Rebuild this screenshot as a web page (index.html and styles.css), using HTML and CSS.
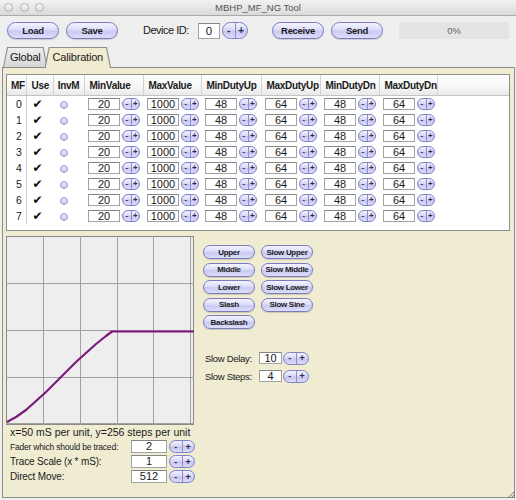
FILE: index.html
```html
<!DOCTYPE html>
<html lang="en">
<head>
    <meta charset="UTF-8">
    <meta name="viewport" content="width=device-width, initial-scale=1.0">
    <title>MBHP_MF_NG Tool</title>
    <link rel="stylesheet" href="styles.css">
</head>
<body>
    <div class="window">
        <div class="titlebar">
            <div class="lights"><span></span><span></span><span></span></div>
            <div class="title">MBHP_MF_NG Tool</div>
        </div>

        <div class="toolbar">
            <button class="aqua btn-load">Load</button>
            <button class="aqua btn-save">Save</button>
            <span class="dev-label">Device ID:</span>
            <span class="field dev-field">0</span>
            <span class="spin spin-lg"><b>-</b><b>+</b></span>
            <button class="aqua btn-receive">Receive</button>
            <button class="aqua btn-send">Send</button>
            <div class="progress">0%</div>
        </div>

        <div class="tabs">
            <div class="tab">Global</div>
            <div class="tab active">Calibration</div>
        </div>

        <div class="panel">
            <div class="grid-wrap">
                <table class="grid">
                    <colgroup>
                        <col style="width:19px"><col style="width:27px"><col style="width:31px">
                        <col style="width:59px"><col style="width:58px"><col style="width:60px">
                        <col style="width:59px"><col style="width:59px"><col style="width:58px"><col>
                    </colgroup>
                    <thead>
                        <tr>
                            <th>MF</th><th>Use</th><th class="c">InvM</th><th>MinValue</th><th>MaxValue</th>
                            <th>MinDutyUp</th><th>MaxDutyUp</th><th>MinDutyDn</th><th>MaxDutyDn</th><th></th>
                        </tr>
                    </thead>
                    <tbody>
                        <tr><td class="mf">0</td><td class="use">✔</td><td><i class="radio"></i></td>
                            <td><span class="val">20</span><span class="spin"><b>-</b><b>+</b></span></td>
                            <td><span class="val">1000</span><span class="spin"><b>-</b><b>+</b></span></td>
                            <td><span class="val">48</span><span class="spin"><b>-</b><b>+</b></span></td>
                            <td><span class="val">64</span><span class="spin"><b>-</b><b>+</b></span></td>
                            <td><span class="val">48</span><span class="spin"><b>-</b><b>+</b></span></td>
                            <td><span class="val">64</span><span class="spin"><b>-</b><b>+</b></span></td><td></td></tr>
                        <tr><td class="mf">1</td><td class="use">✔</td><td><i class="radio"></i></td>
                            <td><span class="val">20</span><span class="spin"><b>-</b><b>+</b></span></td>
                            <td><span class="val">1000</span><span class="spin"><b>-</b><b>+</b></span></td>
                            <td><span class="val">48</span><span class="spin"><b>-</b><b>+</b></span></td>
                            <td><span class="val">64</span><span class="spin"><b>-</b><b>+</b></span></td>
                            <td><span class="val">48</span><span class="spin"><b>-</b><b>+</b></span></td>
                            <td><span class="val">64</span><span class="spin"><b>-</b><b>+</b></span></td><td></td></tr>
                        <tr><td class="mf">2</td><td class="use">✔</td><td><i class="radio"></i></td>
                            <td><span class="val">20</span><span class="spin"><b>-</b><b>+</b></span></td>
                            <td><span class="val">1000</span><span class="spin"><b>-</b><b>+</b></span></td>
                            <td><span class="val">48</span><span class="spin"><b>-</b><b>+</b></span></td>
                            <td><span class="val">64</span><span class="spin"><b>-</b><b>+</b></span></td>
                            <td><span class="val">48</span><span class="spin"><b>-</b><b>+</b></span></td>
                            <td><span class="val">64</span><span class="spin"><b>-</b><b>+</b></span></td><td></td></tr>
                        <tr><td class="mf">3</td><td class="use">✔</td><td><i class="radio"></i></td>
                            <td><span class="val">20</span><span class="spin"><b>-</b><b>+</b></span></td>
                            <td><span class="val">1000</span><span class="spin"><b>-</b><b>+</b></span></td>
                            <td><span class="val">48</span><span class="spin"><b>-</b><b>+</b></span></td>
                            <td><span class="val">64</span><span class="spin"><b>-</b><b>+</b></span></td>
                            <td><span class="val">48</span><span class="spin"><b>-</b><b>+</b></span></td>
                            <td><span class="val">64</span><span class="spin"><b>-</b><b>+</b></span></td><td></td></tr>
                        <tr><td class="mf">4</td><td class="use">✔</td><td><i class="radio"></i></td>
                            <td><span class="val">20</span><span class="spin"><b>-</b><b>+</b></span></td>
                            <td><span class="val">1000</span><span class="spin"><b>-</b><b>+</b></span></td>
                            <td><span class="val">48</span><span class="spin"><b>-</b><b>+</b></span></td>
                            <td><span class="val">64</span><span class="spin"><b>-</b><b>+</b></span></td>
                            <td><span class="val">48</span><span class="spin"><b>-</b><b>+</b></span></td>
                            <td><span class="val">64</span><span class="spin"><b>-</b><b>+</b></span></td><td></td></tr>
                        <tr><td class="mf">5</td><td class="use">✔</td><td><i class="radio"></i></td>
                            <td><span class="val">20</span><span class="spin"><b>-</b><b>+</b></span></td>
                            <td><span class="val">1000</span><span class="spin"><b>-</b><b>+</b></span></td>
                            <td><span class="val">48</span><span class="spin"><b>-</b><b>+</b></span></td>
                            <td><span class="val">64</span><span class="spin"><b>-</b><b>+</b></span></td>
                            <td><span class="val">48</span><span class="spin"><b>-</b><b>+</b></span></td>
                            <td><span class="val">64</span><span class="spin"><b>-</b><b>+</b></span></td><td></td></tr>
                        <tr><td class="mf">6</td><td class="use">✔</td><td><i class="radio"></i></td>
                            <td><span class="val">20</span><span class="spin"><b>-</b><b>+</b></span></td>
                            <td><span class="val">1000</span><span class="spin"><b>-</b><b>+</b></span></td>
                            <td><span class="val">48</span><span class="spin"><b>-</b><b>+</b></span></td>
                            <td><span class="val">64</span><span class="spin"><b>-</b><b>+</b></span></td>
                            <td><span class="val">48</span><span class="spin"><b>-</b><b>+</b></span></td>
                            <td><span class="val">64</span><span class="spin"><b>-</b><b>+</b></span></td><td></td></tr>
                        <tr><td class="mf">7</td><td class="use">✔</td><td><i class="radio"></i></td>
                            <td><span class="val">20</span><span class="spin"><b>-</b><b>+</b></span></td>
                            <td><span class="val">1000</span><span class="spin"><b>-</b><b>+</b></span></td>
                            <td><span class="val">48</span><span class="spin"><b>-</b><b>+</b></span></td>
                            <td><span class="val">64</span><span class="spin"><b>-</b><b>+</b></span></td>
                            <td><span class="val">48</span><span class="spin"><b>-</b><b>+</b></span></td>
                            <td><span class="val">64</span><span class="spin"><b>-</b><b>+</b></span></td><td></td></tr>
                    </tbody>
                </table>
            </div>

            <div class="lower">
                <div class="trace">
                    <!-- fader trace: 5 x 4 units -->
                    <svg class="chart" width="188" height="189" viewBox="0 0 188 189">
                        <rect x="0.5" y="0.5" width="187" height="188" fill="#eeeeee" stroke="#8a8a8a"/>
                        <g stroke="#a2a2a2" stroke-width="1">
                            <line x1="37.5" y1="0" x2="37.5" y2="189"/>
                            <line x1="74.5" y1="0" x2="74.5" y2="189"/>
                            <line x1="111.5" y1="0" x2="111.5" y2="189"/>
                            <line x1="147.5" y1="0" x2="147.5" y2="189"/>
                            <line x1="184.5" y1="0" x2="184.5" y2="189"/>
                            <line x1="0" y1="47.5" x2="188" y2="47.5"/>
                            <line x1="0" y1="94.5" x2="188" y2="94.5"/>
                            <line x1="0" y1="141.5" x2="188" y2="141.5"/>
                            <line x1="0" y1="187.5" x2="188" y2="187.5"/>
                        </g>
                        <polyline fill="none" stroke="#7c1a7c" stroke-width="2.2" stroke-linejoin="round"
                                  points="1,186 10,181 20,174 30,165 40,156 50,146 60,136 70,126 80,117 90,108 100,100 106,95.5 188,95.5"/>
                    </svg>
                    <div class="units">x=50 mS per unit, y=256 steps per unit</div>
                    <div class="param">
                        <span class="param-label small">Fader which should be traced:</span>
                        <span class="field">2</span>
                        <span class="spin spin-md"><b>-</b><b>+</b></span>
                    </div>
                    <div class="param">
                        <span class="param-label">Trace Scale (x * mS):</span>
                        <span class="field">1</span>
                        <span class="spin spin-md"><b>-</b><b>+</b></span>
                    </div>
                    <div class="param">
                        <span class="param-label">Direct Move:</span>
                        <span class="field">512</span>
                        <span class="spin spin-md"><b>-</b><b>+</b></span>
                    </div>
                </div>

                <div class="presets">
                    <div class="preset-grid">
                        <button class="aqua small">Upper</button>
                        <button class="aqua small">Slow Upper</button>
                        <button class="aqua small">Middle</button>
                        <button class="aqua small">Slow Middle</button>
                        <button class="aqua small">Lower</button>
                        <button class="aqua small">Slow Lower</button>
                        <button class="aqua small">Slash</button>
                        <button class="aqua small">Slow Sine</button>
                        <button class="aqua small">Backslash</button>
                    </div>
                    <div class="slow">
                        <div class="slow-row">
                            <span class="slow-label">Slow Delay:</span>
                            <span class="field">10</span>
                            <span class="spin spin-md"><b>-</b><b>+</b></span>
                        </div>
                        <div class="slow-row">
                            <span class="slow-label">Slow Steps:</span>
                            <span class="field">4</span>
                            <span class="spin spin-md"><b>-</b><b>+</b></span>
                        </div>
                    </div>
                </div>
            </div>
        </div>

        <svg class="grip" width="8" height="8" viewBox="0 0 8 8">
            <path d="M8 1 L1 8 M8 4 L4 8 M8 7 L7 8" stroke="#777" stroke-width="1"/>
        </svg>
    </div>
</body>
</html>
```

FILE: styles.css
```css
body {
    margin: 0;
    background: #efefef;
    font-family: "Liberation Sans", Arial, sans-serif;
    color: #1a1a1a;
}
.window {
    position: relative;
    width: 516px;
    height: 500px;
    overflow: hidden;
    background: #efefef;
}

/* title bar */
.titlebar {
    height: 15px;
    border-bottom: 1px solid #a9a9a9;
    background: linear-gradient(#f2f2f2, #dadada);
    display: grid;
    grid-template-columns: 1fr auto 1fr;
    align-items: center;
}
.lights {
    display: flex;
    gap: 6.5px;
    padding-left: 4px;
}
.lights span {
    width: 9px;
    height: 9px;
    box-sizing: border-box;
    border-radius: 50%;
    border: 1px solid #b0b0b0;
    background: linear-gradient(#f6f6f6, #dedede);
}
.title {
    font-size: 9.5px;
    color: #555;
}

/* toolbar */
.toolbar {
    height: 31px;
    box-sizing: border-box;
    padding: 6px 0 0 7px;
    display: flex;
    align-items: flex-start;
}
.aqua {
    height: 17px;
    width: 52px;
    padding: 0;
    border: 1px solid #7b7bc0;
    border-radius: 9px;
    background: linear-gradient(#f4f4ff 0%, #dcdcfa 45%, #c9c9f3 55%, #dedefb 100%);
    box-shadow: 0 1px 1px rgba(0, 0, 0, 0.15);
    font-family: "Liberation Sans", Arial, sans-serif;
    font-weight: bold;
    font-size: 9.5px;
    letter-spacing: -0.3px;
    color: #1c1c1c;
    white-space: nowrap;
    cursor: pointer;
}
.btn-save { margin-left: 7px; }
.dev-label {
    width: 45px;
    margin-left: 25px;
    font-size: 11px;
    letter-spacing: -0.5px;
    line-height: 17px;
    white-space: nowrap;
}
.field {
    box-sizing: border-box;
    background: #fff;
    border: 1px solid #a2a2a2;
    border-top-color: #848484;
    text-align: center;
    font-size: 11px;
}
.dev-field {
    margin: 1px 0 0 10px;
    width: 22px;
    height: 16px;
    line-height: 14px;
    font-size: 11.5px;
}
.btn-receive { margin-left: 24px; }
.btn-send { margin-left: 7px; }
.progress {
    margin-left: 16px;
    width: 110px;
    height: 17px;
    background: #e4e4e4;
    text-align: center;
    font-size: 9.5px;
    line-height: 17px;
    color: #666;
}

/* spinner buttons */
.spin {
    display: inline-flex;
    box-sizing: border-box;
    width: 18px;
    height: 12px;
    border: 1px solid #8080c6;
    border-radius: 6px;
    background: linear-gradient(#f2f2ff 0%, #d8d8f8 45%, #c6c6f1 55%, #dcdcfa 100%);
    vertical-align: top;
    overflow: hidden;
}
.spin b {
    flex: 1;
    display: flex;
    align-items: center;
    justify-content: center;
    font-size: 8px;
    font-weight: bold;
    color: #2a2a44;
}
.spin b:first-child { border-right: 1px solid #8d8dca; }
.spin-lg {
    margin-left: 2px;
    width: 26px;
    height: 17px;
    border-radius: 9px;
}
.spin-lg b { font-size: 10px; }
.spin-md {
    width: 26px;
    height: 13px;
    border-radius: 7px;
}
.spin-md b { font-size: 9px; }

/* tabs */
.tabs {
    height: 20px;
    padding-left: 3px;
    display: flex;
    align-items: flex-end;
}
.tab {
    position: relative;
    z-index: 0;
    height: 20px;
    padding: 0 7px;
    font-size: 11px;
    letter-spacing: -0.2px;
    line-height: 21px;
    color: #1a1a1a;
}
.tab::before,
.tab::after {
    content: "";
    position: absolute;
    z-index: -1;
    clip-path: polygon(0 100%, 4px 0, calc(100% - 4px) 0, 100% 100%);
}
.tab::before {
    inset: 0;
    background: #8e8e8e;
}
.tab::after {
    inset: 1px 1px 0 1px;
    background: linear-gradient(#eeeeee, #d6d6d6);
}
.tab.active {
    z-index: 1;
    margin-left: -3px;
    padding: 0 8px;
}
.tab.active::after {
    bottom: -1px;
    background: #efecd2;
}

/* tab panel */
.panel {
    box-sizing: border-box;
    height: 431px;
    margin-left: 2px;
    width: 513px;
    border: 1px solid #8c8c8c;
    background: #efecd2;
}

/* calibration table */
.grid-wrap {
    box-sizing: border-box;
    height: 157px;
    margin: 6px 4px 0 3px;
    border: 1px solid #8e8e8e;
    background: #fff;
}
.grid {
    width: 100%;
    table-layout: fixed;
    border-collapse: collapse;
}
.grid th {
    height: 20px;
    padding: 0 0 0 5px;
    text-align: left;
    font-size: 10px;
    letter-spacing: -0.3px;
    font-weight: bold;
    background: linear-gradient(#ffffff, #f6f6f6 60%, #e9e9e9);
    border-right: 1px solid #d2d2d2;
    border-bottom: 1px solid #c4c4c4;
    white-space: nowrap;
    overflow: hidden;
}
.grid th:first-child { padding-left: 4px; }
.grid th.c { text-align: center; padding: 0; }
.grid th:last-child { border-right: none; }
.grid td {
    height: 16px;
    padding: 0 0 0 4px;
    white-space: nowrap;
    vertical-align: middle;
    line-height: 12px;
}
.grid td.mf {
    padding-left: 9px;
    border-right: 1px solid #cfcfcf;
    font-size: 10.5px;
}
.grid td.use {
    padding-left: 6px;
    font: 12px "DejaVu Sans", sans-serif;
    color: #111;
}
.radio {
    display: inline-block;
    box-sizing: border-box;
    width: 8px;
    height: 8px;
    margin-left: 3px;
    border-radius: 50%;
    border: 1px solid #a0a0d2;
    background: radial-gradient(circle at 50% 35%, #ececfd, #b7b7e8);
    vertical-align: middle;
}
.val {
    display: inline-block;
    box-sizing: border-box;
    width: 32px;
    height: 12px;
    margin-right: 2px;
    background: #fff;
    border: 1px solid #a2a2a2;
    border-top-color: #868686;
    text-align: center;
    font-size: 11px;
    line-height: 10px;
    vertical-align: top;
}

/* chart and trace settings */
.lower {
    display: flex;
    margin-top: 5px;
    padding-left: 3px;
}
.trace { width: 188px; }
.chart { display: block; }
.units {
    padding-left: 4px;
    height: 14px;
    line-height: 14px;
    font-size: 10.5px;
    white-space: nowrap;
}
.param {
    display: grid;
    grid-template-columns: 123px 36px 26px;
    column-gap: 2px;
    align-items: center;
    height: 15px;
}
.param-label {
    padding-left: 4px;
    font-size: 10px;
    letter-spacing: -0.15px;
    white-space: nowrap;
}
.param-label.small {
    font-size: 8.5px;
    letter-spacing: -0.2px;
}
.param .field {
    height: 13px;
    line-height: 11px;
}

/* preset buttons */
.presets {
    margin-left: 9px;
    padding-top: 9px;
}
.preset-grid {
    display: grid;
    grid-template-columns: 52px 52px;
    column-gap: 6px;
    row-gap: 3.5px;
}
.aqua.small {
    height: 14px;
    border-radius: 7px;
    font-size: 8px;
    letter-spacing: -0.3px;
}
.slow { margin-top: 20px; }
.slow-row {
    display: flex;
    align-items: center;
    height: 18px;
}
.slow-label {
    width: 56px;
    padding-left: 2px;
    box-sizing: border-box;
    font-size: 9.5px;
    letter-spacing: -0.3px;
    white-space: nowrap;
}
.slow-row .field {
    width: 23px;
    height: 12px;
    line-height: 10px;
    margin-right: 1px;
}

/* window resize grip */
.grip {
    position: absolute;
    right: 1px;
    bottom: 2px;
}
```
